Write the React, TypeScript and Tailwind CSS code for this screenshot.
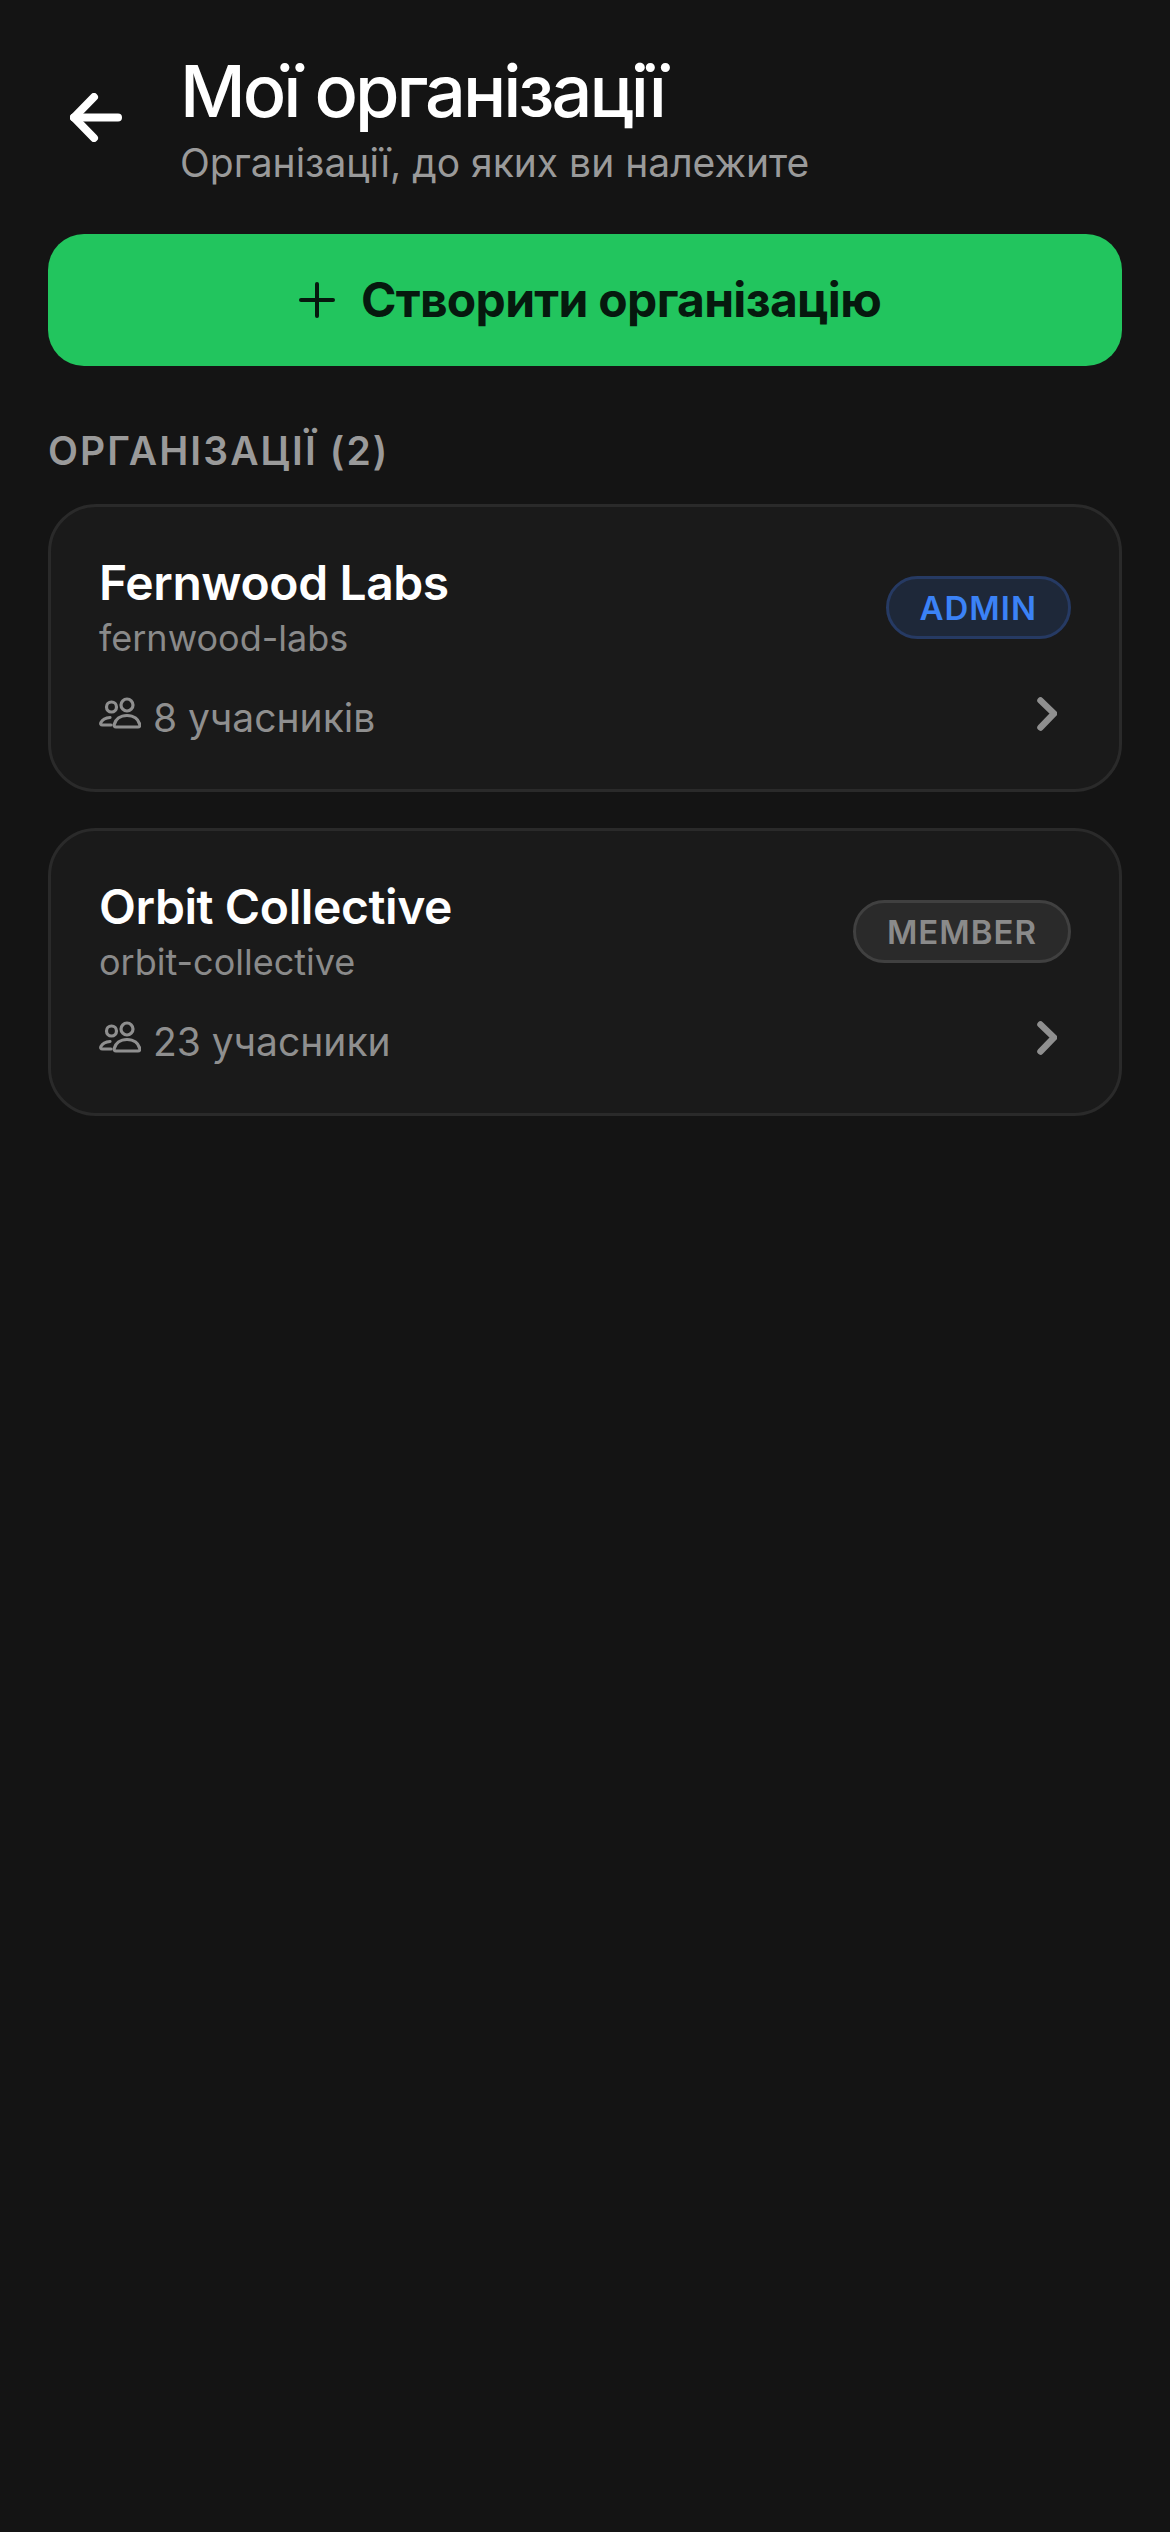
import React from "react";

function People() {
  return (
    <svg width="42" height="33" viewBox="0 0 42 33" fill="none" stroke="#8f8f8f" strokeWidth="3.2" className="mb-[10px] shrink-0">
      <circle cx="12.5" cy="10" r="5" />
      <circle cx="28" cy="8" r="6" />
      <path d="M12 28H3.5C1.8 28 1.3 26.8 2 25.4C3.4 22.6 6.6 20.8 11 20.5" strokeLinecap="round" />
      <path d="M28 18.5C21 18.5 16.5 22.5 15.2 27.5C14.9 29 15.6 30 17 30H39C40.4 30 41.1 29 40.8 27.5C39.5 22.5 35 18.5 28 18.5Z" strokeLinejoin="round" />
    </svg>
  );
}

function Chevron() {
  return (
    <svg width="20" height="34" viewBox="0 0 20 34" fill="none" stroke="#8f8f8f" strokeWidth="6.5" strokeLinecap="round" strokeLinejoin="round" className="mb-[8px]">
      <path d="M3.5 3.5L17 16.5L3.5 30.5" />
    </svg>
  );
}

type Org = { name: string; slug: string; members: string; role: string; badge: string };

const orgs: Org[] = [
  {
    name: "Fernwood Labs",
    slug: "fernwood-labs",
    members: "8 учасників",
    role: "ADMIN",
    badge: "bg-[#1e2839] border-[#263a63] text-[#3b82f6]",
  },
  {
    name: "Orbit Collective",
    slug: "orbit-collective",
    members: "23 учасники",
    role: "MEMBER",
    badge: "bg-[#2a2a2a] border-[#404040] text-[#8a8a8a]",
  },
];

function Card({ org }: { org: Org }) {
  return (
    <div className="h-[288px] rounded-[48px] border-[3px] border-[#2a2a2a] bg-[#1a1a1a] pl-[48px] pr-[48px] pt-[48px]">
      <div className="flex items-start justify-between">
        <div className="flex flex-col">
          <div className="text-[48px] leading-[56px] font-semibold tracking-[-0.4px] text-white">{org.name}</div>
          <div className="mt-[3px] text-[36px] leading-[48px] text-[#8a8a8a]">{org.slug}</div>
        </div>
        <div className={`mt-[21px] flex h-[63px] items-center rounded-full border-[3px] px-[31px] pt-[3px] text-[33px] font-semibold tracking-[1px] ${org.badge}`}>
          {org.role}
        </div>
      </div>
      <div className="mt-[32px] flex items-center justify-between pr-[14px]">
        <div className="flex items-center gap-[12px]">
          <People />
          <span className="text-[39px] leading-[48px] text-[#8f8f8f]">{org.members}</span>
        </div>
        <Chevron />
      </div>
    </div>
  );
}

export default function App() {
  return (
    <div className="min-h-[2532px] bg-[#141414] px-[48px] pt-[48px] font-['Inter',sans-serif]">
      <div className="flex items-center">
        <div className="flex w-[132px] shrink-0 pl-[22px]">
          <svg width="52" height="49" viewBox="0 0 52 49" fill="none" stroke="#ffffff" strokeWidth="8" strokeLinecap="round" strokeLinejoin="round">
            <path d="M4 24.5H48" />
            <path d="M24 4L4 24.5L24 45" />
          </svg>
        </div>
        <div className="flex flex-col">
          <div className="text-[72px] leading-[86px] font-medium tracking-[-3px] text-white">Мої організації</div>
          <div className="mt-[5px] text-[39px] leading-[48px] text-[#9a9a9a]">Організації, до яких ви належите</div>
        </div>
      </div>
      <button className="mt-[47px] flex h-[132px] w-full items-center justify-center gap-[26px] rounded-[36px] bg-[#22c55e] pl-[10px] text-[#06190e]">
        <svg width="36" height="36" viewBox="0 0 36 36" fill="none" stroke="#06190e" strokeWidth="4" strokeLinecap="round">
          <path d="M18 2V34" />
          <path d="M2 18H34" />
        </svg>
        <span className="text-[48px] font-bold tracking-[-0.7px]">Створити організацію</span>
      </button>
      <div className="mt-[61px] text-[39px] leading-[48px] font-semibold tracking-[2.1px] text-[#9a9a9a]">ОРГАНІЗАЦІЇ (2)</div>
      <div className="mt-[29px] flex flex-col gap-[36px]">
        {orgs.map((o) => (
          <Card key={o.slug} org={o} />
        ))}
      </div>
    </div>
  );
}
